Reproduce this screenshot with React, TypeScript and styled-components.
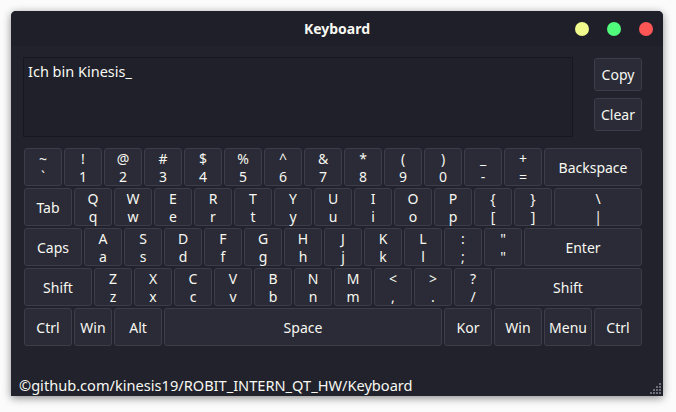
import React from "react";
import styled, { createGlobalStyle } from "styled-components";

const Global = createGlobalStyle`
  html, body { margin: 0; padding: 0; background: #ffffff; }
  body { font-family: "Noto Sans", "Open Sans", sans-serif; }
`;

const Page = styled.div`
  width: 676px;
  height: 412px;
  padding: 11px 0 0 11px;
  box-sizing: border-box;
  background: #fbfbfb;
`;

const Window = styled.div`
  position: relative;
  width: 652px;
  height: 385px;
  display: flex;
  flex-direction: column;
  border-radius: 5px 5px 0 0;
  overflow: hidden;
  background: #21222c;
  box-shadow: 0 2px 9px rgba(0, 0, 0, 0.45);
`;

const TitleBar = styled.div`
  height: 35px;
  flex: none;
  display: grid;
  grid-template-columns: 1fr auto 1fr;
  align-items: center;
  background: #1e1f29;
`;

const Title = styled.div`
  grid-column: 2;
  color: #f8f8f2;
  font-weight: 700;
  font-size: 14px;
`;

const Lights = styled.div`
  grid-column: 3;
  display: flex;
  justify-content: flex-end;
  gap: 18px;
  padding-right: 10px;
`;

const Light = styled.span<{ $c: string }>`
  width: 14px;
  height: 14px;
  border-radius: 50%;
  background: ${(p) => p.$c};
`;

const Body = styled.div`
  flex: 1;
  display: flex;
  flex-direction: column;
  padding: 11px 21px 0 12px;
`;

const TopArea = styled.div`
  display: flex;
  gap: 21px;
`;

const TextArea = styled.div`
  width: 550px;
  height: 80px;
  box-sizing: border-box;
  border: 1px solid #17181f;
  background: #1f2029;
  color: #f8f8f2;
  font-size: 14.5px;
  padding: 3px 4px;
`;

const SideButtons = styled.div`
  display: flex;
  flex-direction: column;
  gap: 7px;
  padding-top: 1px;
`;

const Button = styled.div`
  width: 48px;
  height: 33px;
  box-sizing: border-box;
  border: 1px solid #3c3d49;
  border-radius: 3px;
  background: #2a2b36;
  color: #f8f8f2;
  font-size: 14px;
  display: flex;
  align-items: center;
  justify-content: center;
`;

const Keyboard = styled.div`
  margin: 11px 0 0 1px;
  width: 618px;
  display: flex;
  flex-direction: column;
  gap: 2px;
`;

const Row = styled.div`
  display: flex;
  gap: 2px;
`;

const Key = styled.div<{ $w: number }>`
  width: ${(p) => p.$w}px;
  height: 38px;
  flex: none;
  box-sizing: border-box;
  border: 1px solid #3c3d49;
  border-radius: 3px;
  background: #2a2b36;
  color: #f8f8f2;
  font-size: 14px;
  line-height: 18px;
  padding-top: 1px;
  display: flex;
  flex-direction: column;
  align-items: center;
  justify-content: center;
  white-space: pre;
`;

const Footer = styled.div`
  margin-top: auto;
  padding: 0 0 2px 8px;
  height: 18px;
  color: #f8f8f2;
  font-size: 14.6px;
  line-height: 18px;
`;

const Grip = styled.svg`
  position: absolute;
  right: 1px;
  bottom: 1px;
`;

type K = [string, number];

const rows: K[][] = [
  [
    ["~\n`", 38], ["!\n1", 38], ["@\n2", 38], ["#\n3", 38], ["$\n4", 38], ["%\n5", 38],
    ["^\n6", 38], ["&\n7", 38], ["*\n8", 38], ["(\n9", 38], [")\n0", 38], ["_\n-", 38],
    ["+\n=", 38], ["Backspace", 98],
  ],
  [
    ["Tab", 48], ["Q\nq", 38], ["W\nw", 38], ["E\ne", 38], ["R\nr", 38], ["T\nt", 38],
    ["Y\ny", 38], ["U\nu", 38], ["I\ni", 38], ["O\no", 38], ["P\np", 38], ["{\n[", 38],
    ["}\n]", 38], ["\\\n|", 88],
  ],
  [
    ["Caps", 58], ["A\na", 38], ["S\ns", 38], ["D\nd", 38], ["F\nf", 38], ["G\ng", 38],
    ["H\nh", 38], ["J\nj", 38], ["K\nk", 38], ["L\nl", 38], [":\n;", 38], ["\"\n\"", 38],
    ["Enter", 118],
  ],
  [
    ["Shift", 68], ["Z\nz", 38], ["X\nx", 38], ["C\nc", 38], ["V\nv", 38], ["B\nb", 38],
    ["N\nn", 38], ["M\nm", 38], ["<\n,", 38], [">\n.", 38], ["?\n/", 38], ["Shift", 148],
  ],
  [
    ["Ctrl", 48], ["Win", 38], ["Alt", 48], ["Space", 278], ["Kor", 48], ["Win", 48],
    ["Menu", 48], ["Ctrl", 48],
  ],
];

const gripDots: [number, number][] = [];
for (let r = 0; r < 4; r++) {
  for (let c = 3 - r; c < 4; c++) gripDots.push([c * 3, r * 3]);
}

export default function App() {
  return (
    <>
      <Global />
      <Page>
        <Window>
          <TitleBar>
            <Title>Keyboard</Title>
            <Lights>
              <Light $c="#f1fa8c" />
              <Light $c="#50fa7b" />
              <Light $c="#ff5555" />
            </Lights>
          </TitleBar>
          <Body>
            <TopArea>
              <TextArea>Ich bin Kinesis_</TextArea>
              <SideButtons>
                <Button>Copy</Button>
                <Button>Clear</Button>
              </SideButtons>
            </TopArea>
            <Keyboard>
              {rows.map((row, i) => (
                <Row key={i}>
                  {row.map(([label, w], j) => (
                    <Key key={j} $w={w}>
                      {label.split("\n").map((l, k) => (
                        <span key={k}>{l}</span>
                      ))}
                    </Key>
                  ))}
                </Row>
              ))}
            </Keyboard>
          </Body>
          <Footer>©github.com/kinesis19/ROBIT_INTERN_QT_HW/Keyboard</Footer>
          <Grip width="12" height="12" viewBox="0 0 12 12">
            {gripDots.map(([x, y], i) => (
              <rect key={i} x={x} y={y} width="2" height="2" fill="#6d6e78" />
            ))}
          </Grip>
        </Window>
      </Page>
    </>
  );
}
